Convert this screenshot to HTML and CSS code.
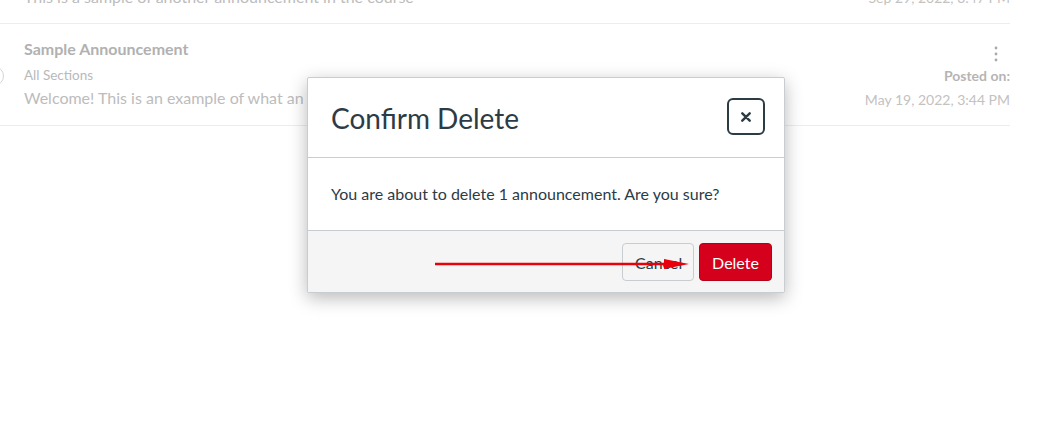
FILE: index.html
```html
<!DOCTYPE html>
<html>
<head>
<meta charset="utf-8">
<link rel="stylesheet" href="styles.css">
</head>
<body>
<div class="page">
  <div class="row partial">
    <div class="main"><div class="msg clip">This is a sample of another announcement in the course</div></div>
    <div class="side"><div class="date clip">Sep 29, 2022, 3:47 PM</div></div>
  </div>
  <div class="row item">
    <div class="check"></div>
    <div class="main">
      <div class="title">Sample Announcement</div>
      <div class="sections">All Sections</div>
      <div class="msg">Welcome! This is an example of what an</div>
    </div>
    <div class="side">
      <svg class="kebab" width="4" height="16" viewBox="0 0 4 16"><circle cx="2" cy="2" r="1.4" fill="#a9a9a9"/><circle cx="2" cy="8" r="1.4" fill="#a9a9a9"/><circle cx="2" cy="14" r="1.4" fill="#a9a9a9"/></svg>
      <div class="posted">Posted on:</div>
      <div class="date">May 19, 2022, 3:44 PM</div>
    </div>
  </div>
</div>

<div class="modal">
  <div class="modal-header">
    <h2 class="modal-title">Confirm Delete</h2>
    <button class="close-btn" aria-label="Close">
      <svg width="10" height="10" viewBox="0 0 10 10"><path d="M1.3 1.3 L8.7 8.7 M8.7 1.3 L1.3 8.7" stroke="#2d3b45" stroke-width="2.4" stroke-linecap="round"/></svg>
    </button>
  </div>
  <div class="modal-body">You are about to delete 1 announcement. Are you sure?</div>
  <div class="modal-footer">
    <button class="btn btn-cancel">Cancel</button>
    <button class="btn btn-delete">Delete</button>
  </div>
</div>

<svg class="arrow" width="260" height="14" viewBox="0 0 260 14">
  <line x1="0" y1="7" x2="236" y2="7" stroke="#e8000b" stroke-width="2.4"/>
  <polygon points="229,2 254,7 229,12" fill="#e8000b"/>
</svg>
</body>
</html>
```

FILE: styles.css
```css
html, body {
  margin: 0;
  padding: 0;
  background: #fff;
  font-family: Lato, "Noto Sans", sans-serif;
}

.page {
  width: 1010px;
}

.row {
  display: flex;
  justify-content: space-between;
  border-bottom: 1px solid #ededed;
  position: relative;
}

.partial {
  height: 23px;
  overflow: hidden;
}

.partial .msg {
  margin-top: -14px;
}

.item {
  height: 102px;
  padding-left: 24px;
  box-sizing: border-box;
}

.check {
  position: absolute;
  left: -16px;
  top: 42px;
  width: 18px;
  height: 18px;
  border: 1px solid #d5d5d5;
  border-radius: 50%;
}

.main {
  padding-top: 15px;
}

.partial .main {
  padding-top: 0;
  padding-left: 24px;
}

.title {
  font-size: 16px;
  font-weight: 700;
  color: #b1b1b1;
  line-height: 20px;
}

.sections {
  font-size: 13.5px;
  color: #b9b9b9;
  line-height: 20px;
  margin-top: 6px;
}

.msg {
  font-size: 16px;
  color: #bcbcbc;
  line-height: 22px;
  margin-top: 2px;
}

.side {
  display: flex;
  flex-direction: column;
  align-items: flex-end;
  padding-top: 22px;
}

.partial .side {
  padding-top: 0;
}

.kebab {
  display: block;
  margin-right: 12px;
}

.posted {
  font-size: 14px;
  font-weight: 700;
  color: #b5b5b5;
  line-height: 18px;
  margin-top: 5px;
}

.date {
  font-size: 14px;
  color: #c2c2c2;
  line-height: 20px;
  margin-top: 5px;
}

.partial .date {
  margin-top: -12px;
}

.modal {
  position: absolute;
  left: 307px;
  top: 77px;
  width: 478px;
  box-sizing: border-box;
  background: #fff;
  border: 1px solid #c7cdd1;
  border-radius: 2px;
  box-shadow: 0 5px 18px rgba(0, 0, 0, 0.28);
}

.modal-header {
  height: 79px;
  display: flex;
  align-items: center;
  justify-content: space-between;
  padding: 0 19px 0 23px;
  border-bottom: 1px solid #c7cdd1;
}

.modal-title {
  margin: 0;
  font-size: 28px;
  font-weight: 400;
  color: #2d3b45;
  line-height: 36px;
}

.close-btn {
  width: 38px;
  height: 37px;
  border: 2px solid #2d3b45;
  border-radius: 6px;
  background: #fff;
  display: flex;
  align-items: center;
  justify-content: center;
  padding: 0;
  margin-top: -2px;
}

.modal-body {
  padding: 24px 23px;
  font-size: 16px;
  line-height: 24px;
  color: #2d3b45;
}

.modal-footer {
  background: #f5f5f5;
  border-top: 1px solid #c7cdd1;
  display: flex;
  justify-content: flex-end;
  gap: 5px;
  padding: 12px 12px 11px;
}

.btn {
  height: 38px;
  font-family: Lato, "Noto Sans", sans-serif;
  font-size: 16px;
  border-radius: 4px;
  padding: 0 12px;
}

.btn-cancel {
  background: #f5f5f5;
  border: 1px solid #c7cdd1;
  color: #2d3b45;
  width: 72px;
}

.btn-delete {
  background: #d5001b;
  border: 1px solid #b50017;
  color: #fff;
  width: 73px;
}

.arrow {
  position: absolute;
  left: 435px;
  top: 257px;
}
```
